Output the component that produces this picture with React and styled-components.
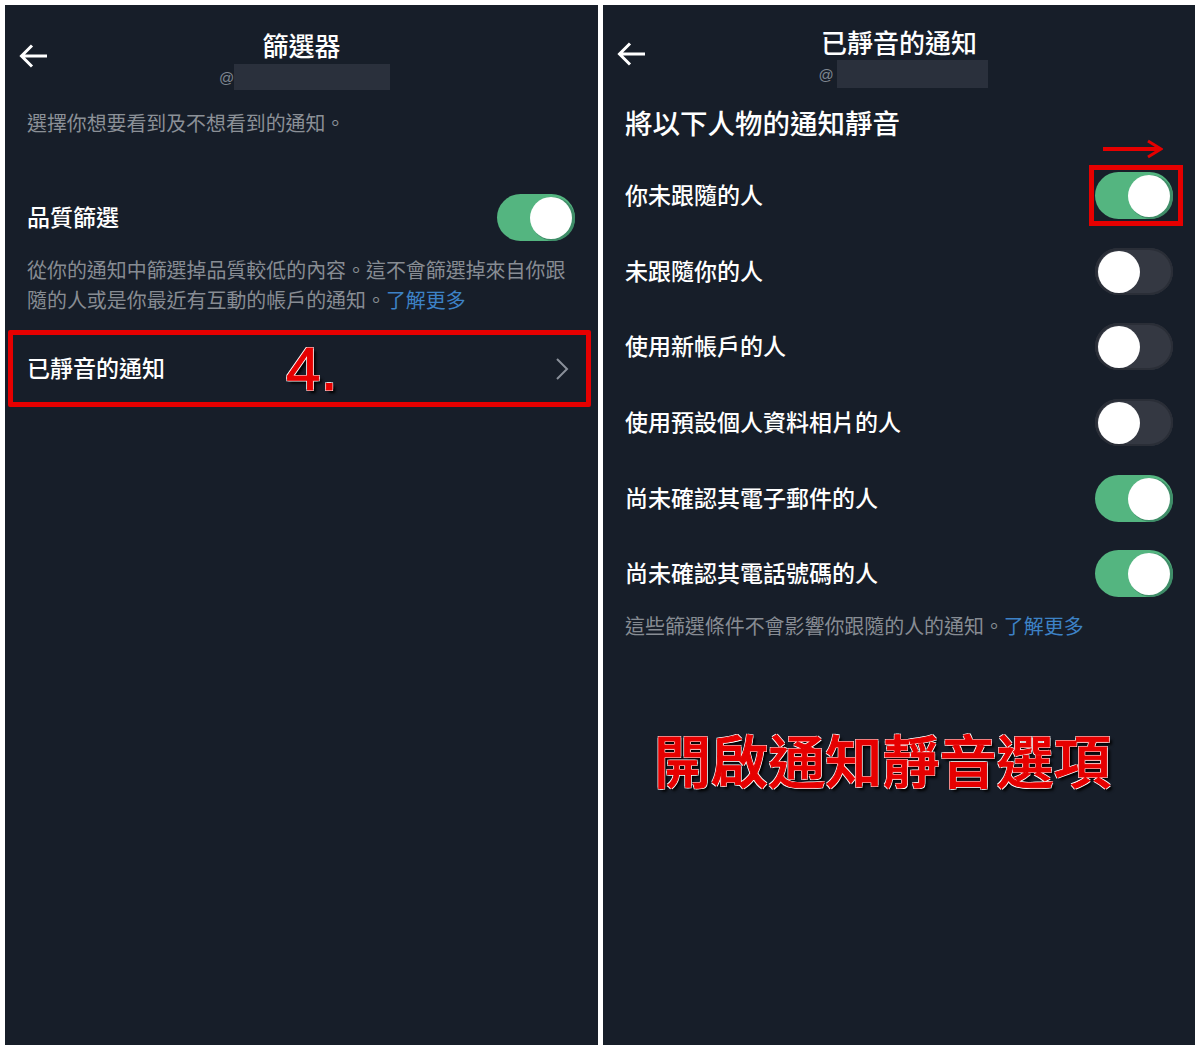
import React from 'react';
import styled, { createGlobalStyle } from 'styled-components';

const Global = createGlobalStyle`
  html, body { margin: 0; background: #fff; }
  body { font-family: "Noto Sans CJK TC", "Noto Sans", sans-serif; }
`;

const Page = styled.div`
  width: 1200px;
  height: 1050px;
  padding: 5px;
  box-sizing: border-box;
  display: grid;
  grid-template-columns: 593px 592px;
  column-gap: 5px;
`;

const Panel = styled.section`
  height: 1040px;
  background: #171e29;
  color: #fff;
  overflow: hidden;
`;

const Header = styled.header`
  display: grid;
  grid-template-columns: 56px 1fr 56px;
  padding-top: ${p => p.$top}px;
  height: ${p => p.$height}px;
  box-sizing: border-box;
`;

const Back = styled.svg`
  width: 30px;
  height: 30px;
  margin: ${p => p.$top}px 0 0 ${p => p.$left}px;
  fill: none;
  stroke: #fff;
  stroke-width: 3;
`;

const TitleBlock = styled.div`
  display: flex;
  flex-direction: column;
  align-items: center;
`;

const Title = styled.h1`
  margin: 0;
  font-size: 26px;
  line-height: 30px;
  font-weight: 500;
`;

const Handle = styled.div`
  display: flex;
  align-items: center;
  color: #7f8791;
  font-family: "Liberation Sans", sans-serif;
  font-size: 15px;
  margin-left: ${p => p.$shift}px;
  margin-top: ${p => p.$gap}px;
`;

const Redacted = styled.span`
  display: block;
  width: ${p => p.$width}px;
  height: ${p => p.$height}px;
  margin-left: ${p => p.$gap}px;
  background: #2a303c;
`;

const Intro = styled.p`
  margin: 0 22px;
  font-size: 19.9px;
  line-height: 30px;
  color: #8b9097;
`;

const QualityRow = styled.div`
  display: flex;
  justify-content: space-between;
  align-items: center;
  margin: 56px 23px 0 22px;
`;

const RowLabel = styled.span`
  font-size: 23px;
  line-height: 30px;
  padding-bottom: 3px;
  font-weight: 500;
`;

const Help = styled.p`
  margin: ${p => p.$top}px ${p => p.$side}px 0;
  font-size: 19.95px;
  line-height: 29.5px;
  color: #878c93;
`;

const Link = styled.span`
  color: #3d82c6;
`;

const Track = styled.div`
  position: relative;
  flex: none;
  width: 78px;
  height: 47px;
  border-radius: 24px;
  box-sizing: border-box;
  background: ${p => (p.$on ? '#54b580' : '#343842')};
  box-shadow: ${p => (p.$on ? 'none' : 'inset 0 0 0 2px #2a2e37')};
`;

const Knob = styled.span`
  position: absolute;
  top: 3px;
  left: ${p => (p.$on ? '33px' : '3px')};
  width: 42px;
  height: 42px;
  border-radius: 50%;
  background: #fff;
  box-shadow: ${p => (p.$on ? '2px 1px 0 1px #3f8d68' : 'none')};
`;

const Toggle = ({ on }) => (
  <Track $on={on}>
    <Knob $on={on} />
  </Track>
);

const MutedRow = styled.div`
  position: relative;
  display: flex;
  justify-content: space-between;
  align-items: center;
  margin: 16px 7px 0 3px;
  height: 77px;
  padding: 0 17px 0 14px;
  box-sizing: border-box;
  border: 5px solid #e60000;
  border-radius: 2px;
`;

const StepNumber = styled.span`
  position: absolute;
  left: 273px;
  top: 50%;
  transform: translateY(-50%);
  font-family: "Liberation Sans", sans-serif;
  font-size: 62px;
  line-height: 62px;
  font-weight: 400;
  color: #e60000;
  -webkit-text-stroke: 1px #e60000;
  text-shadow: 1px 1px 0 #fff, -1px 1px 0 #fff, 1px -1px 0 #fff, -1px -1px 0 #fff, 3px 3px 3px #000;
`;

const Chevron = styled.svg`
  width: 14px;
  height: 22px;
  fill: none;
  stroke: #8a909a;
  stroke-width: 2;
`;

const Heading = styled.h2`
  margin: 0 22px;
  font-size: 27.5px;
  line-height: 40px;
  font-weight: 500;
`;

const List = styled.div`
  display: flex;
  flex-direction: column;
  margin-top: 16px;
`;

const ListRow = styled.div`
  display: flex;
  justify-content: space-between;
  align-items: center;
  height: 75.6px;
  padding: 0 22px;
`;

const Marked = styled.div`
  position: relative;
`;

const MarkBox = styled.span`
  position: absolute;
  left: -6px;
  top: -7px;
  width: 94px;
  height: 61px;
  box-sizing: border-box;
  border: 5px solid #e60000;
`;

const MarkArrow = styled.svg`
  position: absolute;
  left: 8px;
  top: -33px;
  width: 60px;
  height: 20px;
  fill: none;
  stroke: #e60000;
`;

const Banner = styled.div`
  margin: 83px 0 0 51px;
  font-size: 57px;
  line-height: 70px;
  letter-spacing: 0.1px;
  font-weight: 500;
  color: #e60000;
  white-space: nowrap;
  -webkit-text-stroke: 1px #e60000;
  text-shadow: 1px 1px 0 #fff, -1px 1px 0 #fff, 1px -1px 0 #fff, -1px -1px 0 #fff, 3px 3px 3px #000;
`;

const BackArrow = ({ top, left }) => (
  <Back viewBox="0 0 30 30" $top={top} $left={left}>
    <path d="M2 15H28M13 4.5L2.5 15L13 25.5" />
  </Back>
);

const rows = [
  ['你未跟隨的人', true],
  ['未跟隨你的人', false],
  ['使用新帳戶的人', false],
  ['使用預設個人資料相片的人', false],
  ['尚未確認其電子郵件的人', true],
  ['尚未確認其電話號碼的人', true],
];

export default function App() {
  return (
    <Page>
      <Global />
      <Panel>
        <Header $top={25} $height={103}>
          <BackArrow top={11} left={14} />
          <TitleBlock>
            <Title>篩選器</Title>
            <Handle $shift={6} $gap={4}>
              @<Redacted $width={156} $height={26} $gap={0} />
            </Handle>
          </TitleBlock>
        </Header>
        <Intro>選擇你想要看到及不想看到的通知。</Intro>
        <QualityRow>
          <RowLabel>品質篩選</RowLabel>
          <Toggle on />
        </QualityRow>
        <Help $top={14} $side={22}>
          從你的通知中篩選掉品質較低的內容。這不會篩選掉來自你跟隨的人或是你最近有互動的帳戶的通知。<Link>了解更多</Link>
        </Help>
        <MutedRow>
          <RowLabel>已靜音的通知</RowLabel>
          <StepNumber>4.</StepNumber>
          <Chevron viewBox="0 0 14 22">
            <path d="M2 1L12 11L2 21" />
          </Chevron>
        </MutedRow>
      </Panel>
      <Panel>
        <Header $top={22} $height={97}>
          <BackArrow top={12} left={14} />
          <TitleBlock>
            <Title>已靜音的通知</Title>
            <Handle $shift={8} $gap={3}>
              @<Redacted $width={151} $height={28} $gap={3} />
            </Handle>
          </TitleBlock>
        </Header>
        <Heading>將以下人物的通知靜音</Heading>
        <List>
          {rows.map(([label, on], i) => (
            <ListRow key={label}>
              <RowLabel>{label}</RowLabel>
              {i === 0 ? (
                <Marked>
                  <MarkArrow viewBox="0 0 60 20">
                    <path d="M0 10H57" strokeWidth="4" />
                    <path d="M45 2L58 10L45 18" strokeWidth="3" />
                  </MarkArrow>
                  <MarkBox />
                  <Toggle on={on} />
                </Marked>
              ) : (
                <Toggle on={on} />
              )}
            </ListRow>
          ))}
        </List>
        <Help $top={-1} $side={22}>
          這些篩選條件不會影響你跟隨的人的通知。<Link>了解更多</Link>
        </Help>
        <Banner>開啟通知靜音選項</Banner>
      </Panel>
    </Page>
  );
}
